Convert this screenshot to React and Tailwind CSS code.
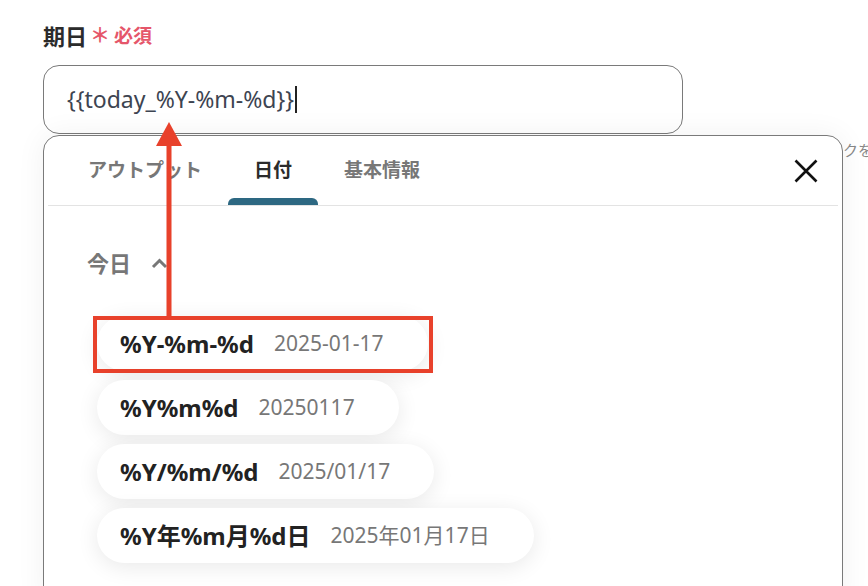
import React from "react";

const chips = [
  { k: "%Y-%m-%d", v: "2025-01-17", hl: true },
  { k: "%Y%m%d", v: "20250117" },
  { k: "%Y/%m/%d", v: "2025/01/17" },
  { k: "%Y年%m月%d日", v: "2025年01月17日" },
];

export default function App() {
  return (
    <div className="relative w-[868px] h-[586px] overflow-hidden bg-white font-['Noto_Sans','Noto_Sans_CJK_JP',sans-serif]">
      <div className="pl-[43px] pt-[22px]">
        <div className="flex items-center h-[28px]">
          <span className="text-[22px] font-bold text-[#2b2b2b] leading-none">期日</span>
          <span className="ml-[3px] text-[20px] font-bold text-[#e5566a] leading-none">＊</span>
          <span className="ml-[4px] text-[19px] font-bold text-[#e5566a] leading-none">必須</span>
        </div>
        <div className="mt-[15px] w-[640px] h-[69px] rounded-[16px] border border-[#7a7a7a] flex items-center pl-[23px]">
          <span className="text-[23px] text-[#3d4451] leading-none">{"{{today_%Y-%m-%d}}"}</span>
          <span className="ml-[1px] w-[1.5px] h-[27px] bg-[#222]"></span>
        </div>
        <div className="ml-[800px] mt-[9px] text-[15px] text-[#888] whitespace-nowrap leading-none">クを</div>
      </div>

      <div className="absolute left-[43px] top-[135px] w-[800px] h-[470px] rounded-t-[16px] border border-[#7a7a7a] bg-white shadow-[0_0_30px_rgba(0,0,0,0.06)]">
        <div className="relative mx-[4px] h-[70px] border-b border-[#e3e3e3] flex pl-[14px]">
          {["アウトプット", "日付", "基本情報"].map((t, i) => (
            <div key={t} className="relative h-full px-[26px] flex items-center">
              <span className={"text-[19px] font-bold leading-none " + (i === 1 ? "text-[#2b2b2b]" : "text-[#777]")}>{t}</span>
              {i === 1 && <div className="absolute left-0 right-0 bottom-0 h-[7px] rounded-t-[6px] bg-[#2d6882]"></div>}
            </div>
          ))}
          <div className="ml-auto mr-[20px] flex items-center">
            <svg width="24" height="24" viewBox="0 0 24 24">
              <path d="M1.5 1.5 L22.5 22.5 M22.5 1.5 L1.5 22.5" stroke="#111" strokeWidth="2.6" />
            </svg>
          </div>
        </div>

        <div className="pl-[43px] pt-[46px] flex items-center">
          <span className="text-[22px] font-bold text-[#777] leading-none">今日</span>
          <svg className="ml-[20px]" width="17" height="11" viewBox="0 0 17 11">
            <path d="M2 9 L8.5 2.5 L15 9" fill="none" stroke="#777" strokeWidth="3" />
          </svg>
        </div>

        <div className="pl-[53px] mt-[42px] flex flex-col items-start gap-[9px]">
          {chips.map((c) => (
            <div key={c.k} className="relative">
              <div className="h-[55px] rounded-full bg-white shadow-[0_4px_22px_rgba(0,0,0,0.09)] flex items-center pl-[23px] pr-[44px]">
                <span className="text-[24px] font-bold text-[#222] leading-none">{c.k}</span>
                <span className="ml-[20px] text-[21px] text-[#777] leading-none">{c.v}</span>
              </div>
              {c.hl && <div className="absolute -left-[4px] -right-[5px] top-0 -bottom-[2px] border-[4px] border-[#e8412b]"></div>}
            </div>
          ))}
        </div>
      </div>

      <svg className="absolute left-[150px] top-[118px]" width="40" height="202" viewBox="0 0 40 202">
        <path d="M19 26 L19 200" stroke="#e8412b" strokeWidth="5" />
        <path d="M6 28 L32 28 L19 4 Z" fill="#e8412b" />
      </svg>
    </div>
  );
}
